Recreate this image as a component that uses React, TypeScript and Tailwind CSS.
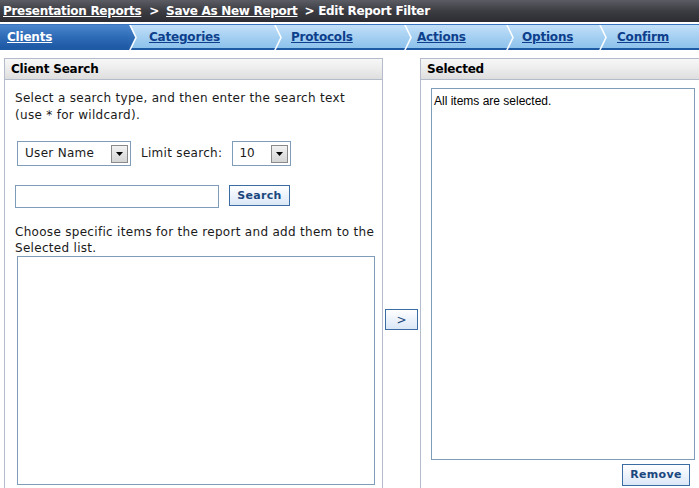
import React from "react";

const Chevron = ({ active = false }: { active?: boolean }) => (
  <svg width="9" height="25" viewBox="0 0 9 25" className="block shrink-0">
    <defs>
      <linearGradient id="actg" x1="0" y1="0" x2="0" y2="1">
        <stop offset="0" stopColor="#4b86cc" />
        <stop offset="0.5" stopColor="#2f6cb8" />
        <stop offset="1" stopColor="#1d58a4" />
      </linearGradient>
    </defs>
    {active && <polygon points="0,0 1.5,0 8,12.5 1.5,25 0,25" fill="url(#actg)" />}
    <polyline points="1.5,-1 8,12.5 1.5,26" fill="none" stroke="#ffffff" strokeWidth="1.6" opacity="0.95" />
  </svg>
);

const Arrow = () => (
  <div className="w-[17px] h-[18px] border border-[#8a8a8a] bg-gradient-to-b from-[#f2f2f2] to-[#d4d4d4] flex items-center justify-center">
    <svg width="7" height="4" viewBox="0 0 7 4">
      <polygon points="0,0 7,0 3.5,4" fill="#000" />
    </svg>
  </div>
);

export default function App() {
  const font = "font-['DejaVu_Sans',Verdana,sans-serif]";
  return (
    <div className={`w-[699px] h-[488px] overflow-hidden bg-white ${font} text-[12px] text-[#1a1a1a]`}>
      {/* top breadcrumb */}
      <div className="h-[22px] bg-gradient-to-b from-[#5c5c64] via-[#3c3c43] to-[#2c2c32] flex items-center pl-[3px] text-white font-bold text-[12px] tracking-[-0.3px]">
        <span className="underline">Presentation Reports</span>
        <span className="ml-[8px]">&gt;</span>
        <span className="underline ml-[7px]">Save As New Report</span>
        <span className="ml-[7px]">&gt; Edit Report Filter</span>
      </div>
      <div className="h-[2px]" />
      {/* tabs */}
      <div className="h-[26px] border-t border-b-2 border-t-[#3a76bf] border-b-[#1f5aa5] bg-gradient-to-b from-[#c2e0f8] via-[#a6d0f2] to-[#8dc2ec] flex text-[12px] font-bold tracking-[-0.2px]">
        <div className="w-[128px] shrink-0 pl-[7px] flex items-center bg-gradient-to-b from-[#4b86cc] via-[#2f6cb8] to-[#1d58a4] text-white">
          <span className="underline">Clients</span>
        </div>
        <Chevron active />
        <div className="w-[136px] shrink-0 pl-[12px] flex items-center text-[#0d3f8c]">
          <span className="underline">Categories</span>
        </div>
        <Chevron />
        <div className="w-[121px] shrink-0 pl-[9px] flex items-center text-[#0d3f8c]">
          <span className="underline">Protocols</span>
        </div>
        <Chevron />
        <div className="w-[93px] shrink-0 pl-[5px] flex items-center text-[#0d3f8c]">
          <span className="underline">Actions</span>
        </div>
        <Chevron />
        <div className="w-[84px] shrink-0 pl-[8px] flex items-center text-[#0d3f8c]">
          <span className="underline">Options</span>
        </div>
        <Chevron />
        <div className="flex-1 pl-[10px] flex items-center text-[#0d3f8c]">
          <span className="underline">Confirm</span>
        </div>
      </div>

      <div className="flex pt-[8px] pl-[4px]">
        {/* left panel */}
        <div className="w-[379px] shrink-0 h-[440px] border border-[#b4bccb] border-b-0 flex flex-col">
          <div className="h-[21px] border-b border-[#b4bccb] bg-gradient-to-b from-[#f7f7f7] via-[#ececec] to-[#dedede] flex items-center pl-[6px] font-bold text-[12px] tracking-[-0.2px] text-black">
            Client Search
          </div>
          <div className="pl-[10px] pt-[10px] leading-[17px] tracking-[0.3px]">
            <div>Select a search type, and then enter the search text</div>
            <div>(use * for wildcard).</div>
            <div className="flex items-center mt-[17px] pl-[2px] tracking-normal">
              <div className="w-[114px] h-[25px] border border-[#7f9db9] flex items-center justify-between pl-[7px] pr-[2px] tracking-[0.3px]">
                <span>User Name</span>
                <Arrow />
              </div>
              <span className="ml-[10px] tracking-[0.3px]">Limit search:</span>
              <div className="ml-[10px] w-[59px] h-[25px] border border-[#7f9db9] flex items-center justify-between pl-[6px] pr-[2px]">
                <span>10</span>
                <Arrow />
              </div>
            </div>
            <div className="flex items-start mt-[19px] tracking-normal">
              <div className="w-[204px] h-[23px] border border-[#7f9db9]" />
              <div className="ml-[10px] w-[61px] h-[21px] border border-[#3b6da3] bg-gradient-to-b from-[#ffffff] to-[#dbe7f7] flex items-center justify-center font-bold text-[11px] text-[#1b477e] tracking-[0.3px]">
                Search
              </div>
            </div>
            <div className="mt-[16px] leading-[16px]">Choose specific items for the report and add them to the</div>
            <div className="leading-[16px]">Selected list.</div>
            <div className="ml-[2px] w-[358px] h-[229px] border border-[#7f9db9]" />
          </div>
        </div>
        {/* middle */}
        <div className="w-[37px] shrink-0 flex flex-col items-center pt-[251px]">
          <div className="w-[33px] h-[21px] border border-[#3b6da3] bg-gradient-to-b from-[#ffffff] to-[#dbe7f7] flex items-center justify-center text-[#1b477e] text-[12px]">
            &gt;
          </div>
        </div>
        {/* right panel */}
        <div className="w-[290px] h-[440px] border border-[#b4bccb] border-b-0 flex flex-col shrink-0">
          <div className="h-[21px] border-b border-[#b4bccb] bg-gradient-to-b from-[#f7f7f7] via-[#ececec] to-[#dedede] flex items-center pl-[6px] font-bold text-[12px] tracking-[-0.2px] text-black">
            Selected
          </div>
          <div className="pl-[10px] pt-[8px] w-[279px] flex flex-col">
            <div className="w-[264px] h-[372px] border border-[#7f9db9] pl-[2px] pt-[3px] font-['Liberation_Sans',Arial,sans-serif] text-[12px] text-black">
              All items are selected.
            </div>
            <div className="flex justify-end w-[264px] pr-[5px] mt-[4px]">
              <div className="w-[68px] h-[22px] border border-[#3b6da3] bg-gradient-to-b from-[#ffffff] to-[#dbe7f7] flex items-center justify-center font-bold text-[11px] text-[#1b477e] tracking-[0.3px]">
                Remove
              </div>
            </div>
          </div>
        </div>
      </div>
    </div>
  );
}
